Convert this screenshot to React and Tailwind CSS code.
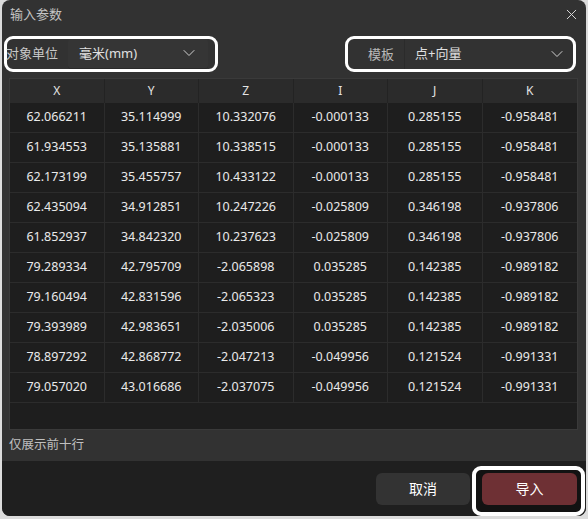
import React from "react";
import { ChevronDown, X } from "lucide-react";

const headers = ["X", "Y", "Z", "I", "J", "K"];

const rows = [
  ["62.066211", "35.114999", "10.332076", "-0.000133", "0.285155", "-0.958481"],
  ["61.934553", "35.135881", "10.338515", "-0.000133", "0.285155", "-0.958481"],
  ["62.173199", "35.455757", "10.433122", "-0.000133", "0.285155", "-0.958481"],
  ["62.435094", "34.912851", "10.247226", "-0.025809", "0.346198", "-0.937806"],
  ["61.852937", "34.842320", "10.237623", "-0.025809", "0.346198", "-0.937806"],
  ["79.289334", "42.795709", "-2.065898", "0.035285", "0.142385", "-0.989182"],
  ["79.160494", "42.831596", "-2.065323", "0.035285", "0.142385", "-0.989182"],
  ["79.393989", "42.983651", "-2.035006", "0.035285", "0.142385", "-0.989182"],
  ["78.897292", "42.868772", "-2.047213", "-0.049956", "0.121524", "-0.991331"],
  ["79.057020", "43.016686", "-2.037075", "-0.049956", "0.121524", "-0.991331"],
];

const App = () => {
  return (
    <div
      className="w-[588px] h-[519px] bg-[#dcdcdc] pl-[2px] pr-[2px] pb-[3px]"
      style={{ fontFamily: '"Noto Sans","Noto Sans CJK SC",sans-serif' }}
    >
      <div className="h-full bg-[#323232] rounded-[8px] flex flex-col">
        {/* title */}
        <div className="h-[30px] flex items-center justify-between pl-[8px] pr-[6px]">
          <span className="text-[13px] text-[#c4c4c4]">输入参数</span>
          <X size={17} strokeWidth={1.4} className="text-[#d8d8d8]" />
        </div>

        {/* selectors */}
        <div className="mt-[6px] h-[36px] flex justify-between pl-[2px] pr-[10px]">
          <div className="w-[214px] h-full border-[3px] border-white rounded-[9px] flex items-center">
            <span className="text-[13px] text-[#c8c8c8] w-[62px] -ml-[1px]">对象单位</span>
            <div className="w-[140px] h-[30px] bg-[#353535] border-b border-[#2a2a2a] rounded-[3px] flex items-center justify-between pl-[11px] pr-[9px]">
              <span className="text-[13px] text-[#e0e0e0]">毫米(mm)</span>
              <ChevronDown size={20} strokeWidth={1.2} className="text-[#d0d0d0]" />
            </div>
          </div>
          <div className="w-[231px] h-full border-[3px] border-white rounded-[9px] flex items-center">
            <span className="text-[13px] text-[#b8b8b8] w-[57px] pl-[20px] border-r border-[#2b2b2b] h-[30px] leading-[30px]">模板</span>
            <div className="flex-1 h-[30px] flex items-center justify-between pl-[10px] pr-[6px]">
              <span className="text-[13px] text-[#e0e0e0]">点+向量</span>
              <ChevronDown size={20} strokeWidth={1.2} className="text-[#d0d0d0]" />
            </div>
          </div>
        </div>

        {/* table */}
        <div className="mt-[6px] ml-[7px] mr-[8px] h-[353px] bg-[#1e1e1e] border border-[#3a3a3a]">
          <div className="grid grid-cols-6 h-[24px] bg-[#2b2b2b]">
            {headers.map((h, i) => (
              <div
                key={h}
                className={`flex items-center justify-center text-[12px] text-[#e4e4e4] ${i < 5 ? "border-r border-[#232323]" : ""}`}
              >
                {h}
              </div>
            ))}
          </div>
          {rows.map((r, ri) => (
            <div key={ri} className="grid grid-cols-6 h-[30px] border-b border-[#2c2c2c]">
              {r.map((v, i) => (
                <div
                  key={i}
                  className={`flex items-center justify-center text-[12.5px] text-[#eaeaea] ${i < 5 ? "border-r border-[#2c2c2c]" : ""}`}
                >
                  {v}
                </div>
              ))}
            </div>
          ))}
        </div>

        {/* status */}
        <div className="h-[31px] flex items-center pl-[7px] text-[12.5px] text-[#c0c0c0]">
          仅展示前十行
        </div>

        {/* footer */}
        <div className="flex-1 bg-[#1f1f1f] rounded-b-[8px] flex items-start justify-end pt-[5px] pr-[1px] gap-[2px]">
          <button className="mt-[7px] w-[94px] h-[32px] rounded-[6px] bg-[#333333] text-[14px] text-white">
            取消
          </button>
          <div className="w-[113px] h-[50px] border-[4px] border-white rounded-[9px] bg-[#121212] p-[3px] pl-[6px]">
            <button className="w-[95px] h-[32px] rounded-[6px] bg-[#6e3034] text-[14px] text-white">
              导入
            </button>
          </div>
        </div>
      </div>
    </div>
  );
};

export default App;
